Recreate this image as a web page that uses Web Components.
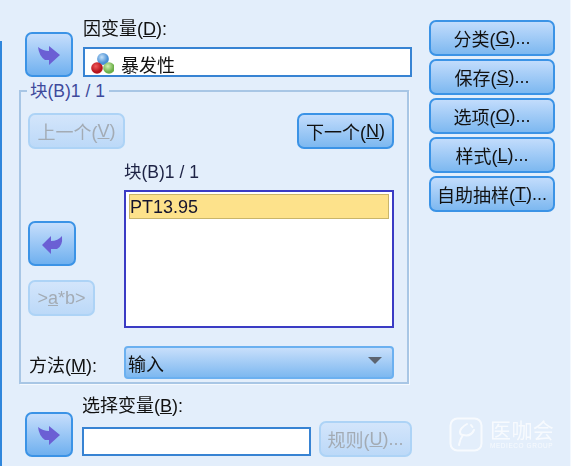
<!DOCTYPE html>
<html lang="zh"><head><meta charset="utf-8">
<style>
html,body{margin:0;padding:0;background:#e3eefb;}
body{width:571px;height:466px;overflow:hidden;font:18px "Liberation Sans","Noto Sans CJK SC",sans-serif;color:#111;}
</style></head><body>
<x-dialog>
  <x-varrow slot="dep-arrow" dir="right"></x-varrow>
  <x-field slot="dep" label="因变量" key="D">
    <x-nominal></x-nominal>暴发性
  </x-field>
  <x-block slot="block">
    <x-btn slot="prev" disabled w="97">上一个(<u>V</u>)</x-btn>
    <x-btn slot="next" w="97">下一个(<u>N</u>)</x-btn>
    <x-varrow slot="back" dir="left"></x-varrow>
    <x-btn slot="ab" disabled w="67">&gt;<u>a</u>*b&gt;</x-btn>
    <x-list slot="list" caption="块(B)1 / 1"><span>PT13.95</span></x-list>
    <x-combo slot="method" label="方法" key="M" value="输入"></x-combo>
  </x-block>
  <x-varrow slot="sel-arrow" dir="right"></x-varrow>
  <x-field slot="sel" label="选择变量" key="B" w="229"></x-field>
  <x-btn slot="rule" disabled w="93">规则(<u>U</u>)...</x-btn>
  <x-btn slot="side" w="126">分类(<u>G</u>)...</x-btn>
  <x-btn slot="side" w="126">保存(<u>S</u>)...</x-btn>
  <x-btn slot="side" w="126">选项(<u>O</u>)...</x-btn>
  <x-btn slot="side" w="126">样式(<u>L</u>)...</x-btn>
  <x-btn slot="side" w="126">自助抽样(<u>T</u>)...</x-btn>
  <x-mark slot="mark"></x-mark>
</x-dialog>
<script>
function def(name,css,html,init){
  customElements.define(name,class extends HTMLElement{
    connectedCallback(){
      if(this.shadowRoot)return;
      const r=this.attachShadow({mode:"open"});
      r.innerHTML="<style>"+css+"</style>"+(typeof html==="function"?html(this):html);
      if(init)init(this,r);
    }
  });
}
def("x-dialog",`
:host{display:flex;width:571px;height:466px;position:relative;box-sizing:border-box;border-right:1px solid #f3f8fe;filter:blur(.4px);}
.edge{width:2px;background:#2f86dc;margin-top:41px;flex:none;}
.main{flex:none;width:410px;margin-left:17px;display:flex;flex-direction:column;}
.row{display:flex;align-items:flex-end;}
.top{height:77px;margin-left:6px;}
.top ::slotted(x-varrow){margin-right:10px;}
.blockwrap{margin-top:13px;}
.bottom{margin-top:20px;margin-left:6px;height:53px;align-items:flex-end;}
.bottom ::slotted(x-varrow){margin-right:9px;}
.bottom ::slotted(x-btn){margin-left:8px;}
.side{flex:none;margin-top:20px;display:flex;flex-direction:column;gap:3px;}
`,`<div class="edge"></div>
<div class="main">
  <div class="row top"><slot name="dep-arrow"></slot><slot name="dep"></slot></div>
  <div class="blockwrap"><slot name="block"></slot></div>
  <div class="row bottom"><slot name="sel-arrow"></slot><slot name="sel"></slot><slot name="rule"></slot></div>
</div>
<div class="side"><slot name="side"></slot></div>
<slot name="mark"></slot>`);

def("x-btn",`
:host{display:inline-flex;box-sizing:border-box;height:36px;align-items:center;justify-content:center;white-space:nowrap;
 border:2px solid #3b93e6;border-radius:7px;background:linear-gradient(#c2dcfc,#7db8f0);color:#111;font-size:18px;}
:host([disabled]){border-color:#add3f6;background:linear-gradient(#d3e5fb,#bcd9f8);color:#a3abb4;}
`,`<slot></slot>`,(h)=>{h.style.width=h.getAttribute("w")+"px";});

def("x-varrow",`
:host{display:block;box-sizing:border-box;width:48px;height:45px;flex:none;border:2px solid #3b93e6;border-radius:7px;
 background:linear-gradient(#c6defc,#6fb0ef);}
svg{display:block;width:44px;height:41px;}
`,h=>h.getAttribute("dir")==="left"
 ?`<svg viewBox="0 0 44 41"><path d="M12 22 L21 13 V18 Q28 18 32 13 Q33 23 27 26 L21 26 V31 Z" fill="#6b5fd4"/></svg>`
 :`<svg viewBox="0 0 44 41"><path d="M33 21 L22 12 V17 Q16 17 11 13 Q12 22 18 26 L22 26 V31 Z" fill="#6b5fd4"/></svg>`);

def("x-field",`
:host{display:flex;flex-direction:column;margin-bottom:0;}
.lab{height:18px;line-height:18px;white-space:nowrap;margin-bottom:9px;}
.box{box-sizing:border-box;height:30px;width:329px;border:2px solid #3783d3;background:#fff;display:flex;align-items:center;padding:4px 0 0 5px;}
:host([w]) .lab{margin-bottom:12px;}
:host([w]) .box{height:29px;margin-bottom:1px;}
u{text-underline-offset:1px;}
`,h=>`<div class="lab">${h.getAttribute("label")}(<u>${h.getAttribute("key")}</u>):</div><div class="box"><slot></slot></div>`,
(h,r)=>{const w=h.getAttribute("w");if(w)r.querySelector(".box").style.width=w+"px";});

def("x-nominal",`
:host{display:inline-block;width:24px;height:24px;margin:-4px 7px 0 0;flex:none;}
svg{display:block;}
`,`<svg width="24" height="24" viewBox="0 0 24 24">
<defs>
<radialGradient id="b" cx=".4" cy=".35"><stop offset="0" stop-color="#c4e0f7"/><stop offset="1" stop-color="#4a90d6"/></radialGradient>
<radialGradient id="r" cx=".4" cy=".35"><stop offset="0" stop-color="#f05a5a"/><stop offset="1" stop-color="#b5121c"/></radialGradient>
<radialGradient id="g" cx=".4" cy=".35"><stop offset="0" stop-color="#d4efb4"/><stop offset="1" stop-color="#6cb048"/></radialGradient>
</defs>
<circle cx="13" cy="9" r="5.9" fill="url(#b)"/>
<circle cx="19" cy="18" r="5.8" fill="url(#g)"/>
<circle cx="7" cy="18" r="5.8" fill="url(#r)"/>
</svg>`);

def("x-block",`
:host{display:block;box-sizing:border-box;width:390px;height:294px;border:2px solid #a8c6e5;position:relative;padding:21px 13px 0 7px;box-shadow:1px 1px 0 #f5f9fe;}
.legend{position:absolute;left:6px;top:-11px;padding:0 4px 0 3px;background:#e3eefb;color:#3e4a9c;font-size:17.5px;line-height:20px;white-space:nowrap;}
.g{display:grid;grid-template-columns:96px 270px;column-gap:0;}
.nav{grid-column:1/3;display:flex;justify-content:space-between;}
.left{display:flex;flex-direction:column;align-items:flex-start;padding-top:72px;gap:14px;}
.method{grid-column:1/3;margin-top:18px;}
`,`<div class="legend">块(B)1 / 1</div>
<div class="g">
 <div class="nav"><slot name="prev"></slot><slot name="next"></slot></div>
 <div class="left"><slot name="back"></slot><slot name="ab"></slot></div>
 <slot name="list"></slot>
 <div class="method"><slot name="method"></slot></div>
</div>`);

def("x-list",`
:host{display:block;padding-top:12px;}
.cap{line-height:18px;height:29px;box-sizing:border-box;padding-top:2px;font-size:17.5px;color:#1d2244;}
.box{box-sizing:border-box;height:138px;border:2px solid #3a3bc4;background:#fff;padding:2px 3px;}
.box ::slotted(span){display:block;box-sizing:border-box;height:25px;line-height:23px;padding-top:1px;background:#fde28b;border:1px solid #c9b56a;padding-left:0;color:#14142e;}
`,h=>`<div class="cap">${h.getAttribute("caption")}</div><div class="box"><slot></slot></div>`);

def("x-combo",`
:host{display:grid;grid-template-columns:96px 270px;align-items:center;}
.lab{white-space:nowrap;padding-left:1px;padding-top:2px;}
.c{box-sizing:border-box;height:33px;border:2px solid #6bb0f0;border-radius:4px;background:linear-gradient(#c8dffb,#7db8f0);display:flex;align-items:center;justify-content:space-between;padding:0 10px 0 2px;}
.t{width:0;height:0;border-left:7px solid transparent;border-right:7px solid transparent;border-top:7px solid #5c6470;margin-top:-5px;}
`,h=>`<div class="lab">${h.getAttribute("label")}(<u>${h.getAttribute("key")}</u>):</div><div class="c"><span>${h.getAttribute("value")}</span><span class="t"></span></div>`);

def("x-mark",`
:host{position:absolute;left:449px;top:417px;display:flex;align-items:center;gap:7px;color:#fff;opacity:.72;}
svg{display:block;}
.n{display:flex;flex-direction:column;align-items:flex-start;}
.zh{font-size:21px;line-height:22px;letter-spacing:.4px;}
.en{font-size:6.5px;line-height:8px;letter-spacing:.55px;white-space:nowrap;}
`,`<svg width="34" height="35" viewBox="0 0 34 35" fill="none" stroke="#fff" stroke-width="2" stroke-linecap="round" stroke-linejoin="round">
<rect x="1.5" y="1.5" width="31" height="32" rx="7"/>
<path d="M18 7 Q11 11 11 15 Q11 18 14 18 Q11 22 10 28"/><path d="M14 18 Q22 20 25 13"/><path d="M22 8 L23.5 10"/>
</svg><div class="n"><div class="zh">医咖会</div><div class="en">MEDIECO GROUP</div></div>`);
</script>
</body></html>
